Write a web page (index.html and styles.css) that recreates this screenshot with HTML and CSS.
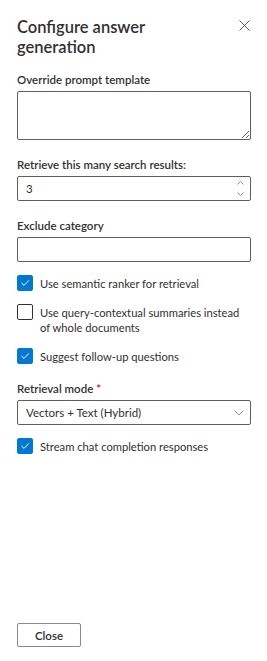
FILE: index.html
```html
<!DOCTYPE html>
<html lang="en">
<head>
  <meta charset="UTF-8" />
  <title>Configure answer generation</title>
  <link rel="stylesheet" href="styles.css">
</head>
<body>
  <div class="panel">
    <div class="panel-header">
      <h2 class="panel-title">Configure answer generation</h2>
      <button class="close-icon" aria-label="Close">
        <svg width="11" height="11" viewBox="0 0 11 11"><path d="M0.5 0.5 L10.5 10.5 M10.5 0.5 L0.5 10.5" stroke="#605e5c" stroke-width="1" fill="none"/></svg>
      </button>
    </div>

    <div class="panel-body">
      <div class="field">
        <label class="label" for="promptTemplate">Override prompt template</label>
        <textarea id="promptTemplate" class="input textarea"></textarea>
      </div>

      <div class="field">
        <label class="label" for="retrieveCount">Retrieve this many search results:</label>
        <div class="spin">
          <input type="text" id="retrieveCount" class="input" value="3" />
          <div class="spin-arrows">
            <svg width="7" height="4" viewBox="0 0 7 4"><path d="M0.5 3.5 L3.5 0.5 L6.5 3.5" stroke="#8a8886" stroke-width="0.9" fill="none"/></svg>
            <svg width="7" height="4" viewBox="0 0 7 4"><path d="M0.5 0.5 L3.5 3.5 L6.5 0.5" stroke="#8a8886" stroke-width="0.9" fill="none"/></svg>
          </div>
        </div>
      </div>

      <div class="field">
        <label class="label" for="excludeCategory">Exclude category</label>
        <input type="text" id="excludeCategory" class="input" />
      </div>

      <label class="check">
        <span class="box checked"><svg width="10" height="8" viewBox="0 0 10 8"><path d="M1.5 4 L4 6.4 L8.8 1.4" stroke="#fff" stroke-width="1" fill="none"/></svg></span>
        <span class="check-text">Use semantic ranker for retrieval</span>
      </label>

      <label class="check">
        <span class="box"></span>
        <span class="check-text">Use query-contextual summaries instead of whole documents</span>
      </label>

      <label class="check">
        <span class="box checked"><svg width="10" height="8" viewBox="0 0 10 8"><path d="M1.5 4 L4 6.4 L8.8 1.4" stroke="#fff" stroke-width="1" fill="none"/></svg></span>
        <span class="check-text">Suggest follow-up questions</span>
      </label>

      <div class="field">
        <label class="label">Retrieval mode <span class="required">*</span></label>
        <div class="dropdown">
          <span>Vectors + Text (Hybrid)</span>
          <svg width="10" height="6" viewBox="0 0 10 6"><path d="M0.5 0.5 L5 5 L9.5 0.5" stroke="#8a8886" stroke-width="0.9" fill="none"/></svg>
        </div>
      </div>

      <label class="check">
        <span class="box checked"><svg width="10" height="8" viewBox="0 0 10 8"><path d="M1.5 4 L4 6.4 L8.8 1.4" stroke="#fff" stroke-width="1" fill="none"/></svg></span>
        <span class="check-text">Stream chat completion responses</span>
      </label>
    </div>

    <div class="panel-footer">
      <button class="btn">Close</button>
    </div>
  </div>
</body>
</html>
```

FILE: styles.css
```css
body {
  margin: 0;
  padding: 0;
  background: #fff;
  font-family: Lato, "Open Sans", sans-serif;
  color: #323130;
}

.panel {
  display: flex;
  flex-direction: column;
  min-height: 100vh;
  box-sizing: border-box;
  padding: 17px 16px 14px 17px;
}

.panel-header {
  display: flex;
  justify-content: space-between;
  align-items: flex-start;
}

.panel-title {
  margin: 0;
  width: 200px;
  font-size: 16.5px;
  line-height: 20px;
  font-weight: 600;
}

.close-icon {
  background: none;
  border: none;
  padding: 0;
  margin: 1px 0 0 0;
  width: 14px;
  height: 14px;
  display: flex;
  align-items: center;
  justify-content: center;
}

.panel-body {
  display: flex;
  flex-direction: column;
  gap: 13px;
  margin-top: 11px;
}

.label {
  display: block;
  padding: 4px 0;
  font-size: 11.5px;
  line-height: 15px;
  font-weight: 600;
}

.required {
  color: #a4262c;
}

.input {
  display: block;
  width: 100%;
  box-sizing: border-box;
  height: 25px;
  border: 1px solid #605e5c;
  border-radius: 2px;
  padding: 0 8px;
  font-family: inherit;
  font-size: 11.5px;
  color: #323130;
  outline: none;
}

.textarea {
  height: 49px;
  resize: vertical;
}

.spin {
  position: relative;
}

.spin-arrows {
  position: absolute;
  right: 7px;
  top: 5px;
  display: flex;
  flex-direction: column;
  gap: 7px;
}

.spin-arrows svg {
  display: block;
}

.dropdown {
  display: flex;
  justify-content: space-between;
  align-items: center;
  height: 25px;
  box-sizing: border-box;
  border: 1px solid #605e5c;
  border-radius: 2px;
  padding: 0 6px 0 8px;
  font-size: 11.5px;
}

.check {
  display: flex;
  align-items: flex-start;
  gap: 7px;
  font-size: 11.2px;
  line-height: 15px;
}

.box {
  flex: none;
  width: 16px;
  height: 16px;
  box-sizing: border-box;
  border: 1px solid #323130;
  border-radius: 2px;
  display: flex;
  align-items: center;
  justify-content: center;
}

.box.checked {
  background: #0078d4;
  border-color: #0078d4;
}

.check-text {
  padding-top: 1px;
}

.panel-footer {
  margin-top: auto;
}

.btn {
  width: 64px;
  height: 24px;
  background: #fff;
  border: 1px solid #8a8886;
  border-radius: 2px;
  font-family: inherit;
  font-size: 11.5px;
  font-weight: 600;
  color: #323130;
}
```
